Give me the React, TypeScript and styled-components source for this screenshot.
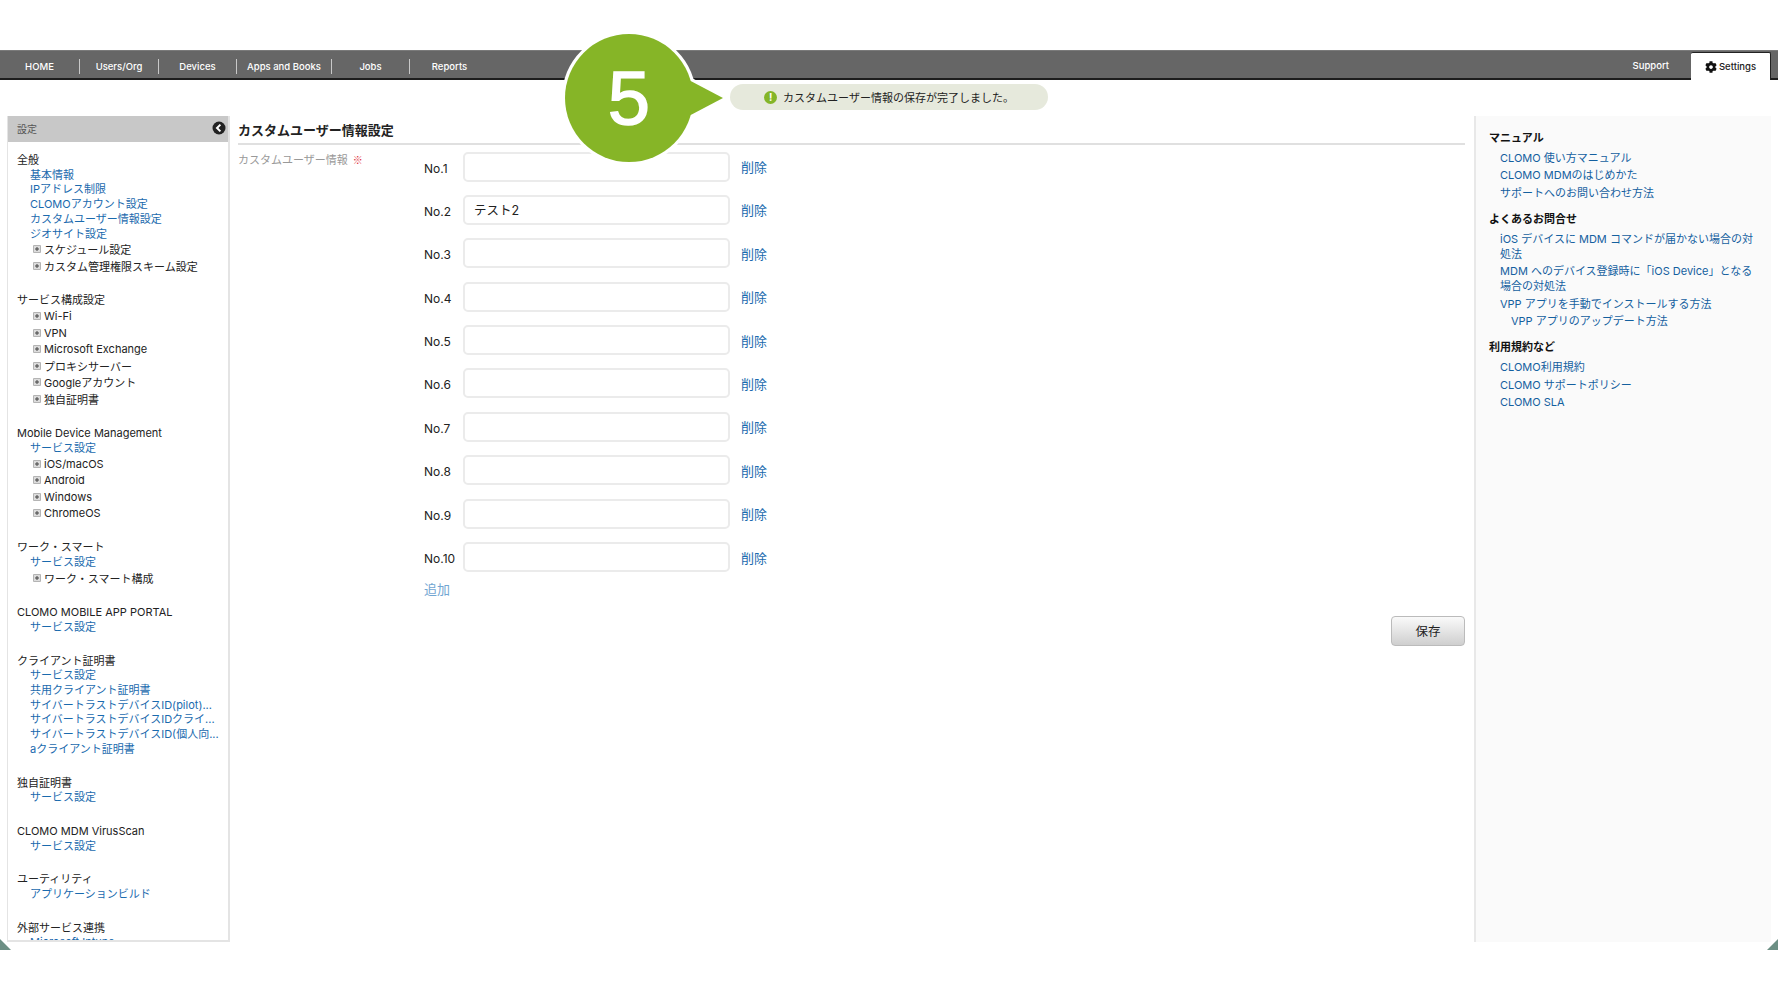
import React from "react";
import styled, { createGlobalStyle } from "styled-components";
import { FaCog } from "react-icons/fa";

const Global = createGlobalStyle`
  html, body { margin: 0; padding: 0; background: #fff; }
  body { font-family: Inter, "Noto Sans CJK JP", sans-serif; font-size: 11px; color: #222; }
  #root { width: 1778px; height: 1000px; overflow: hidden; }
`;

const Page = styled.div`
  position: relative;
  width: 1778px;
  height: 1000px;
  padding-top: 50px;
  box-sizing: border-box;
  background: #fff;
`;

const NavBar = styled.nav`
  display: flex;
  align-items: flex-end;
  height: 30px;
  box-sizing: border-box;
  padding: 0 7px 4px 0;
  background: #666;
  border-top: 1px solid #7a7a7a;
  border-bottom: 2px solid #1d1d1d;
`;

const NavTab = styled.a<{ $w: number; $plain?: boolean }>`
  display: flex;
  align-items: center;
  justify-content: center;
  width: ${(p) => p.$w}px;
  height: 15px;
  box-sizing: border-box;
  border-right: ${(p) => (p.$plain ? "none" : "1px solid #c8c8c8")};
  color: #fff;
  font-size: 9.5px;
  font-weight: 500;
`;

const NavSpacer = styled.div`
  flex: 1;
`;

const SupportTab = styled.a`
  margin-right: 22px;
  align-self: center;
  margin-bottom: -6px;
  color: #fff;
  font-size: 9.5px;
  font-weight: 500;
`;

const SettingsTab = styled.a`
  display: flex;
  align-items: center;
  justify-content: center;
  gap: 2px;
  align-self: flex-end;
  width: 80px;
  height: 28px;
  margin-bottom: -6px;
  box-sizing: border-box;
  background: #fff;
  border-top: 1px solid #222;
  border-right: 1px solid #222;
  border-radius: 2px 2px 0 0;
  color: #222;
  font-size: 9.5px;
  font-weight: 500;
`;

const FlashRow = styled.div`
  display: flex;
  height: 36px;
  padding: 4px 0 0 730px;
  box-sizing: border-box;
`;

const Flash = styled.div`
  display: flex;
  align-items: center;
  justify-content: center;
  gap: 6px;
  width: 318px;
  height: 26px;
  border-radius: 13px;
  background: #e6e9dc;
  color: #222;
  font-size: 11px;
`;

const FlashDot = styled.span`
  display: flex;
  align-items: center;
  justify-content: center;
  width: 13px;
  height: 13px;
  border-radius: 50%;
  background: #84b528;
  color: #fff;
  font-size: 10px;
  font-weight: 700;
  line-height: 1;
`;

const Columns = styled.div`
  display: flex;
  height: 826px;
  padding: 0 7px;
  gap: 8px;
`;

const Sidebar = styled.aside`
  flex: 0 0 223px;
  box-sizing: border-box;
  height: 100%;
  overflow: hidden;
  border: 1px solid #e4e4e4;
  border-bottom-width: 2px;
  border-top: none;
  border-left-width: 1px;
  border-right-width: 2px;
`;

const SideHeader = styled.div`
  display: flex;
  align-items: center;
  justify-content: space-between;
  height: 26px;
  padding: 0 2px 2px 9px;
  box-sizing: border-box;
  background: #c8c8c8;
  color: #555;
  font-size: 10px;
`;

const SideBody = styled.div`
  padding: 11px 0 0 9px;
`;

const SideGroup = styled.section`
  padding-bottom: 19px;
`;

const SideHeading = styled.div`
  line-height: 14.7px;
  color: #222;
  white-space: nowrap;
`;

const SideLink = styled.a`
  display: block;
  padding-left: 13px;
  line-height: 14.7px;
  color: #1a6aae;
  white-space: nowrap;
`;

const TreeItem = styled.div`
  display: flex;
  align-items: center;
  gap: 3px;
  height: 16.5px;
  padding-left: 16px;
  color: #222;
  white-space: nowrap;
`;

const Main = styled.main`
  flex: 1;
  min-width: 0;
  margin-right: 1px;
`;

const Title = styled.h1`
  height: 29px;
  margin: 0;
  padding-top: 6px;
  box-sizing: border-box;
  border-bottom: 2px solid #e0e0e0;
  color: #222;
  font-size: 13px;
  font-weight: 700;
  line-height: 16px;
`;

const FormLayout = styled.div`
  display: flex;
  padding-top: 6.5px;
`;

const FieldLabel = styled.div`
  flex: 0 0 186px;
  color: #999;
  line-height: 16px;
`;

const Required = styled.span`
  margin-left: 5px;
  color: #e0303a;
  font-size: 10px;
  font-family: "Noto Sans CJK JP", sans-serif;
`;

const Fields = styled.div`
  flex: 1;
  display: flex;
  flex-direction: column;
`;

const RowList = styled.div`
  display: flex;
  flex-direction: column;
  gap: 13.4px;
`;

const Row = styled.div`
  display: flex;
  align-items: center;
  height: 30px;
`;

const RowNo = styled.label`
  flex: 0 0 39px;
  padding-top: 3px;
  color: #222;
  font-size: 12px;
  font-weight: 400;
`;

const TextBox = styled.input`
  width: 267px;
  height: 30px;
  box-sizing: border-box;
  padding: 0 9px;
  border: 2px solid #ebebeb;
  border-radius: 5px;
  background: #fff;
  color: #222;
  font-family: inherit;
  font-size: 12.5px;
  outline: none;
`;

const DeleteLink = styled.a`
  margin-left: 11px;
  color: #1a6aae;
  font-size: 13px;
`;

const AddLink = styled.a`
  margin-top: 7.5px;
  color: #72a6d2;
  font-size: 13px;
  line-height: 18px;
`;

const SaveRow = styled.div`
  display: flex;
  justify-content: flex-end;
  margin-top: 18px;
`;

const SaveButton = styled.button`
  width: 74px;
  height: 30px;
  border: 1px solid #bbb;
  border-radius: 4px;
  background: linear-gradient(#fafafa, #cfcfcf);
  color: #222;
  font-family: inherit;
  font-size: 12.5px;
`;

const HelpPanel = styled.aside`
  flex: 0 0 297px;
  box-sizing: border-box;
  height: 100%;
  padding: 14.5px 10px 0 13px;
  background: #fafafa;
  border-left: 2px solid #e8e8e8;
`;

const HelpHeading = styled.h2`
  margin: 0 0 5px;
  color: #111;
  font-size: 11px;
  font-weight: 700;
  line-height: 15px;
`;

const HelpList = styled.div`
  display: flex;
  flex-direction: column;
  gap: 2.5px;
  margin-bottom: 11px;
`;

const HelpLink = styled.a<{ $sub?: boolean }>`
  display: block;
  padding-left: ${(p) => (p.$sub ? 22 : 11)}px;
  color: #14609f;
  line-height: 15px;
`;

const Callout = styled.svg`
  position: absolute;
  left: 555px;
  top: 26px;
  overflow: visible;
`;

const Corner = styled.div<{ $side: "left" | "right" }>`
  position: absolute;
  top: 939px;
  ${(p) => p.$side}: 0;
  width: 11px;
  height: 11px;
  background: #6c8f84;
  clip-path: ${(p) =>
    p.$side === "left" ? "polygon(0 0, 100% 100%, 0 100%)" : "polygon(100% 0, 100% 100%, 0 100%)"};
`;

const CollapseIcon = () => (
  <svg width="14" height="14" viewBox="0 0 14 14">
    <circle cx="7" cy="7" r="6.5" fill="#222" />
    <path d="M8.4 3.6 5 7l3.4 3.4" fill="none" stroke="#fff" strokeWidth="2" />
  </svg>
);

const PlusBox = () => (
  <svg width="8" height="8" viewBox="0 0 8 8">
    <rect x="0" y="0" width="8" height="8" rx="1" fill="#b4b4b4" />
    <rect x="1" y="1" width="6" height="6" fill="#dcdcdc" />
    <path d="M4 2v4M2 4h4" stroke="#444" strokeWidth="1" />
  </svg>
);

type Item = ["h" | "l" | "t", string];
const groups: Item[][] = [
  [["h", "全般"], ["l", "基本情報"], ["l", "IPアドレス制限"], ["l", "CLOMOアカウント設定"], ["l", "カスタムユーザー情報設定"], ["l", "ジオサイト設定"], ["t", "スケジュール設定"], ["t", "カスタム管理権限スキーム設定"]],
  [["h", "サービス構成設定"], ["t", "Wi-Fi"], ["t", "VPN"], ["t", "Microsoft Exchange"], ["t", "プロキシサーバー"], ["t", "Googleアカウント"], ["t", "独自証明書"]],
  [["h", "Mobile Device Management"], ["l", "サービス設定"], ["t", "iOS/macOS"], ["t", "Android"], ["t", "Windows"], ["t", "ChromeOS"]],
  [["h", "ワーク・スマート"], ["l", "サービス設定"], ["t", "ワーク・スマート構成"]],
  [["h", "CLOMO MOBILE APP PORTAL"], ["l", "サービス設定"]],
  [["h", "クライアント証明書"], ["l", "サービス設定"], ["l", "共用クライアント証明書"], ["l", "サイバートラストデバイスID(pilot)..."], ["l", "サイバートラストデバイスIDクライ..."], ["l", "サイバートラストデバイスID(個人向..."], ["l", "aクライアント証明書"]],
  [["h", "独自証明書"], ["l", "サービス設定"]],
  [["h", "CLOMO MDM VirusScan"], ["l", "サービス設定"]],
  [["h", "ユーティリティ"], ["l", "アプリケーションビルド"]],
  [["h", "外部サービス連携"], ["l", "Microsoft Intune"]],
];

const tabs: [string, number][] = [
  ["HOME", 80], ["Users/Org", 79], ["Devices", 78], ["Apps and Books", 95], ["Jobs", 78], ["Reports", 79],
];

const help: { title: string; links: [string, boolean?][] }[] = [
  { title: "マニュアル", links: [["CLOMO 使い方マニュアル"], ["CLOMO MDMのはじめかた"], ["サポートへのお問い合わせ方法"]] },
  { title: "よくあるお問合せ", links: [["iOS デバイスに MDM コマンドが届かない場合の対処法"], ["MDM へのデバイス登録時に「iOS Device」となる場合の対処法"], ["VPP アプリを手動でインストールする方法"], ["VPP アプリのアップデート方法", true]] },
  { title: "利用規約など", links: [["CLOMO利用規約"], ["CLOMO サポートポリシー"], ["CLOMO SLA"]] },
];

const numbers = [1, 2, 3, 4, 5, 6, 7, 8, 9, 10];

export default function App() {
  return (
    <Page>
      <Global />
      <NavBar>
        {tabs.map(([t, w], i) => (
          <NavTab key={t} $w={w} $plain={i === tabs.length - 1}>{t}</NavTab>
        ))}
        <NavSpacer />
        <SupportTab>Support</SupportTab>
        <SettingsTab><FaCog size={12} color="#111" />Settings</SettingsTab>
      </NavBar>
      <FlashRow>
        <Flash>
          <FlashDot>!</FlashDot>
          カスタムユーザー情報の保存が完了しました。
        </Flash>
      </FlashRow>
      <Columns>
        <Sidebar>
          <SideHeader>設定<CollapseIcon /></SideHeader>
          <SideBody>
            {groups.map((g, i) => (
              <SideGroup key={i}>
                {g.map(([k, t], j) =>
                  k === "h" ? <SideHeading key={j}>{t}</SideHeading>
                  : k === "l" ? <SideLink key={j}>{t}</SideLink>
                  : <TreeItem key={j}><PlusBox />{t}</TreeItem>
                )}
              </SideGroup>
            ))}
          </SideBody>
        </Sidebar>
        <Main>
          <Title>カスタムユーザー情報設定</Title>
          <FormLayout>
            <FieldLabel>カスタムユーザー情報<Required>※</Required></FieldLabel>
            <Fields>
              <RowList>
                {numbers.map((n) => (
                  <Row key={n}>
                    <RowNo>No.{n}</RowNo>
                    <TextBox readOnly defaultValue={n === 2 ? "テスト2" : ""} />
                    <DeleteLink>削除</DeleteLink>
                  </Row>
                ))}
              </RowList>
              <AddLink>追加</AddLink>
              <SaveRow><SaveButton>保存</SaveButton></SaveRow>
            </Fields>
          </FormLayout>
        </Main>
        <HelpPanel>
          {help.map((s) => (
            <div key={s.title}>
              <HelpHeading>{s.title}</HelpHeading>
              <HelpList>
                {s.links.map(([t, sub]) => <HelpLink key={t} $sub={sub}>{t}</HelpLink>)}
              </HelpList>
            </div>
          ))}
        </HelpPanel>
      </Columns>
      <Callout width="180" height="144" viewBox="0 0 180 144">
        <circle cx="74" cy="72" r="64" fill="#fff" stroke="#fff" strokeWidth="6" />
        <path d="M134 54 168 72 134 90Z" fill="#fff" stroke="#fff" strokeWidth="6" strokeLinejoin="round" />
        <circle cx="74" cy="72" r="64" fill="#86b527" />
        <path d="M130 52 168 72 130 92Z" fill="#86b527" />
        <text x="74" y="98" textAnchor="middle" fill="#fff" stroke="#fff" strokeWidth="1.5" fontFamily="'Liberation Sans', sans-serif" fontSize="76">5</text>
      </Callout>
      <Corner $side="left" />
      <Corner $side="right" />
    </Page>
  );
}
